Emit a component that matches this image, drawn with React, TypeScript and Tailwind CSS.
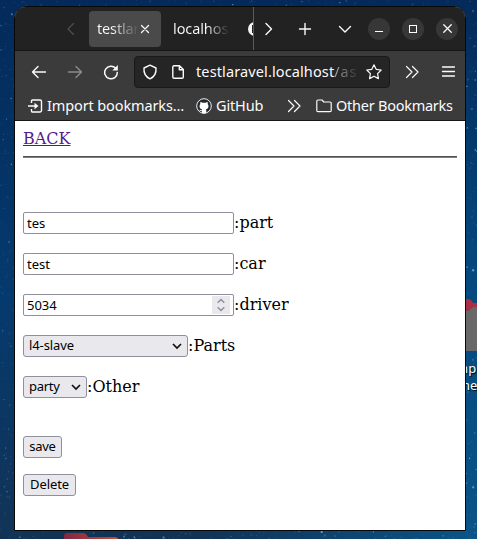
import React from "react";

type IconProps = { d: string; className?: string; size?: number; width?: number };

function Icon({ d, className = "", size = 16, width = 1.4 }: IconProps) {
  return (
    <svg width={size} height={size} viewBox="0 0 16 16" fill="none" stroke="currentColor" strokeWidth={width} strokeLinecap="round" strokeLinejoin="round" className={"shrink-0 " + className}>
      <path d={d} />
    </svg>
  );
}

const ICONS = {
  left: "M10.5 2.5 5 8l5.500 5.500",
  right: "M5 2.500 10.500 8 5 13.500",
  down: "M2.500 5.500 8 11l5.500-5.500",
  plus: "M8 2.500v11M2.500 8h11",
  close: "M4 4l8 8M12 4l-8 8",
  back: "M14.500 8H1.500M7 2.500 1.500 8 7 13.500",
  forward: "M1.500 8h13M9 2.500 14.500 8 9 13.500",
  shield: "M8 1.200 14 4c.4 4.700-1.700 8.900-6 10.900C3.700 12.900 1.600 8.700 2 4Z",
  page: "M4 1.800h5.500L13.300 5.500V13a1.200 1.200 0 0 1-1.200 1.200H4A1.200 1.200 0 0 1 2.800 13V3A1.200 1.200 0 0 1 4 1.800ZM9.300 2v3.700h3.800",
  star: "M8 .8 10.200 5.300 15.200 6 11.600 9.600 12.400 14.600 8 12.200 3.600 14.600 4.400 9.600.8 6 5.800 5.300Z",
  double: "M2.500 2.500 8 8l-5.500 5.500M8.500 2.500 14 8l-5.500 5.500",
  menu: "M2.500 3h12M2.500 7.500h12M2.500 12h12",
  folder: "M.8 12.500V3.200A1.200 1.200 0 0 1 2 2h4l1.800 2H14a1.200 1.200 0 0 1 1.200 1.200v7.300A1.200 1.200 0 0 1 14 13.700H2A1.200 1.200 0 0 1 .8 12.500Z",
};

const STARS = Array.from({ length: 5200 }, (_, i) => {
  const rand = (n: number) => {
    const v = Math.sin((i + 1) * n) * 43758.5453;
    return v - Math.floor(v);
  };
  return { x: rand(12.9898) * 477, y: rand(78.233) * 539, a: 0.1 + rand(37.719) ** 7 * 0.8, s: rand(91.7) > 0.93 ? 2 : 1.2 };
});

function Wallpaper() {
  return (
    <svg className="absolute inset-0" width="477" height="539">
      <defs>
        <linearGradient id="sky" x1="0" y1="0" x2="0" y2="1">
          <stop offset="0" stopColor="#032a5a" />
          <stop offset=".55" stopColor="#053a6e" />
          <stop offset="1" stopColor="#123356" />
        </linearGradient>
        <linearGradient id="east" x1="0" y1="0" x2="0" y2="1">
          <stop offset="0" stopColor="#042a58" />
          <stop offset=".5" stopColor="#05487e" />
          <stop offset="1" stopColor="#0a5488" />
        </linearGradient>
        <linearGradient id="folder" x1="0" y1="0" x2="1" y2="0">
          <stop offset="0" stopColor="#7e2a45" />
          <stop offset="1" stopColor="#c54b30" />
        </linearGradient>
        <linearGradient id="base" x1="0" y1="0" x2="1" y2="0">
          <stop offset="0" stopColor="#0a5488" stopOpacity="0" />
          <stop offset="1" stopColor="#0a5488" />
        </linearGradient>
      </defs>
      <rect width="477" height="539" fill="url(#sky)" />
      <rect x="200" y="530" width="277" height="9" fill="url(#base)" />
      <rect x="465" width="12" height="539" fill="url(#east)" />
      {STARS.map((s, i) => (
        <rect key={i} x={s.x} y={s.y} width={s.s} height={s.s} fill="#8bc8e6" opacity={s.a} />
      ))}
      <path d="M64 539v-3q0-3 3-3h16q3 0 5 4h27q3 0 3 2Z" fill="url(#folder)" />
      <path d="M463 299h5q3 0 5 4h4v4h-4l-5 4h-5Z" fill="#a93043" />
      <path d="M463 311h5l5-4h4v44h-14Z" fill="#686868" />
    </svg>
  );
}

function WindowButton({ children }: { children: React.ReactNode }) {
  return <div className="flex h-[22px] w-[22px] shrink-0 items-center justify-center rounded-full bg-[#373737]">{children}</div>;
}

function TabStrip() {
  return (
    <div className="flex h-11 items-center border-b border-[#151515] bg-[#222222]">
      <Icon d={ICONS.left} className="ml-12 text-[#505050]" width={1.1} />
      <div className="ml-[10px] flex h-9 w-[72px] items-center rounded bg-[#4a4a4a] pl-2">
        <span className="w-[42px] overflow-hidden whitespace-nowrap bg-gradient-to-r from-[#fbfbfe] from-35% to-[#4a4a4a] bg-clip-text text-[14.500px] tracking-[-.15px] text-transparent">testlar</span>
        <Icon d={ICONS.close} size={14} className="-ml-[1px]" />
      </div>
      <span className="ml-3 w-[55px] overflow-hidden whitespace-nowrap bg-gradient-to-r from-[#fbfbfe] from-60% to-[#303030] bg-clip-text text-[14.500px] tracking-[-.1px] text-transparent">localhos</span>
      <div className="ml-5 flex h-full w-[6px] items-center overflow-hidden border-r border-[#5c5c5c]">
        <svg width="14" height="14" viewBox="0 0 14 14" className="shrink-0"><circle cx="7" cy="7" r="7" fill="#f5f5f5" /><path d="M4 3v8h7V3Z" fill="#222" /></svg>
      </div>
      <Icon d={ICONS.right} className="ml-[7px]" />
      <Icon d={ICONS.plus} className="ml-5" />
      <Icon d={ICONS.down} className="ml-6" />
      <div className="ml-[15px] flex gap-3">
        <WindowButton><div className="mt-[5px] h-px w-2 bg-white" /></WindowButton>
        <WindowButton><div className="h-2 w-2 border border-white" /></WindowButton>
        <WindowButton><Icon d={ICONS.close} size={15} /></WindowButton>
      </div>
    </div>
  );
}

function NavigationBar() {
  return (
    <div className="flex h-[37px] items-center pt-1">
      <Icon d={ICONS.back} className="ml-4" />
      <Icon d={ICONS.forward} className="ml-5 text-[#8c8c8c]" />
      <svg width="16" height="16" viewBox="0 0 16 16" fill="none" stroke="currentColor" strokeWidth="1.5" className="ml-5 shrink-0">
        <path d="M12.700 4.300A6.300 6.300 0 1 0 14.300 8.500" strokeLinecap="round" />
        <path d="M14.800 1v5.500H9.300Z" fill="currentColor" stroke="none" />
      </svg>
      <div className="ml-[15px] flex h-8 w-64 shrink-0 items-center rounded border border-[#191919] bg-[#252525]">
        <Icon d={ICONS.shield} className="ml-[7px]" />
        <Icon d={ICONS.page} className="ml-3" />
        <span className="ml-[10px] w-[165px] whitespace-nowrap text-[14.500px] tracking-[.12px]">
          testlaravel.localhost<span className="bg-gradient-to-r from-[#b0b0b0] to-[#383838] bg-clip-text tracking-[.8px] text-transparent">/as</span>
        </span>
        <Icon d={ICONS.star} className="ml-[5px]" width={1.2} />
      </div>
      <Icon d={ICONS.double} className="ml-[14px]" width={1.2} />
      <Icon d={ICONS.menu} className="ml-5" width={1.3} />
    </div>
  );
}

function BookmarksBar() {
  return (
    <div className="flex h-[33px] items-center border-b border-[#171717] pt-1 text-[14.500px]">
      <svg width="16" height="16" viewBox="0 0 16 16" fill="none" stroke="currentColor" strokeWidth="1.4" className="ml-3 shrink-0">
        <path d="M4.500 5V3a1 1 0 0 1 1-1H13a1.500 1.500 0 0 1 1.500 1.500v9A1.500 1.500 0 0 1 13 14H5.500a1 1 0 0 1-1-1v-2M1 8h8" />
        <path d="m7.500 4.800 4 3.200-4 3.200Z" fill="currentColor" stroke="none" />
      </svg>
      <span className="ml-1 w-[138px] whitespace-nowrap tracking-[-.12px]">Import bookmarks…</span>
      <svg width="16" height="16" viewBox="0 0 16 16" className="ml-[11px] shrink-0">
        <circle cx="8" cy="8" r="7.300" fill="#24292e" stroke="#eee" />
        <path d="M5.800 15v-2c-1.500.3-2-.6-2.500-1.100.9-.2 1.300.7 2.500.4l.4-.8C4.300 11 3.500 10 3.500 8c0-.8.3-1.500.8-2-.2-.7-.1-1.500.1-2 .8 0 1.500.4 2 .8a8 8 0 0 1 3.200 0c.6-.4 1.200-.8 2-.8.2.6.2 1.400.1 2 .5.500.8 1.200.8 2 0 2-.9 3-2.700 3.500.4.400.5.900.5 1.600V15a7 7 0 0 1-4.500 0Z" fill="#fff" />
      </svg>
      <span className="ml-1 w-[48px] whitespace-nowrap tracking-[-.15px]">GitHub</span>
      <Icon d={ICONS.double} className="ml-[22px]" width={1.2} />
      <Icon d={ICONS.folder} className="ml-[14px]" width={1.2} />
      <span className="ml-1 whitespace-nowrap tracking-[-.25px]">Other Bookmarks</span>
    </div>
  );
}

const UI = "font-['Noto_Sans',sans-serif] text-[13px]";

function Field({ label, children }: { label: string; children: React.ReactNode }) {
  return (
    <label className="mb-[19px] flex h-[22px] items-center">
      {children}
      <span className="text-[16px] leading-[22px]">:{label}</span>
    </label>
  );
}

function TextBox({ value, stepper = false }: { value: string; stepper?: boolean }) {
  return (
    <div className="flex h-[22px] w-[211px] items-center rounded-[2px] border border-[#8f8f9d] bg-white pr-[3px]">
      <input readOnly defaultValue={value} className={UI + " h-5 min-w-0 flex-1 pl-[3px] outline-none"} />
      {stepper && (
        <div className="flex h-[18px] w-[18px] items-center justify-center bg-[#e9e9ed]">
          <svg width="8" height="14" viewBox="0 0 8 14" fill="none" stroke="#8f8f9d" strokeWidth="1.5"><path d="M.7 4.700 4 1.500l3.300 3.200M.7 9.300 4 12.500l3.300-3.200" /></svg>
        </div>
      )}
    </div>
  );
}

function Select({ value, wide = false }: { value: string; wide?: boolean }) {
  return (
    <div className={UI + " flex h-[22px] items-center justify-between rounded-[3px] border border-[#8f8f9d] bg-[#e9e9ed] pr-[5px] pl-[5px] " + (wide ? "w-[165px] tracking-[-.1px]" : "w-16 tracking-[-.3px]")}>
      <span>{value}</span>
      <svg width="10" height="8" viewBox="0 0 10 8" fill="none" stroke="#111" strokeWidth="1.7"><path d="M1 2l4 4 4-4" /></svg>
    </div>
  );
}

function Button({ children, className }: { children: React.ReactNode; className: string }) {
  return <button className={UI + " flex h-[22px] items-center justify-center rounded-[3px] border border-[#8f8f9d] bg-[#e9e9ed] " + className}>{children}</button>;
}

export default function App() {
  return (
    <div className="relative h-[539px] w-[477px] overflow-hidden">
      <Wallpaper />
      <div className="absolute top-[360px] left-[463px] w-10 font-['Noto_Sans',sans-serif] text-[13px] leading-[17px] text-white [text-shadow:1px_1px_1px_black]">
        <div className="-ml-[7px]">mp</div>
        <div className="-ml-px">ne</div>
      </div>
      <div className="absolute top-[6px] left-[14px] flex h-[525px] w-[452px] flex-col overflow-hidden rounded-t-xl border border-[#080808] bg-white">
        <header className="bg-[#3b3b3b] font-['Noto_Sans',sans-serif] text-[#fbfbfe]">
          <TabStrip />
          <NavigationBar />
          <BookmarksBar />
        </header>
        <main className="flex flex-col items-start px-2 pt-2 font-['DejaVu_Serif',serif] text-[16px] text-black">
          <a href="#" className="h-[19px] leading-[19px] text-[#551a8b] underline">BACK</a>
          <hr className="mt-2 mb-[54px] h-[2px] w-full border-t border-b border-t-[#505050] border-b-[#808080]" />
          <Field label="part"><TextBox value="tes" /></Field>
          <Field label="car"><TextBox value="test" /></Field>
          <Field label="driver"><TextBox value="5034" stepper /></Field>
          <Field label="Parts"><Select value="l4-slave" wide /></Field>
          <Field label="Other"><Select value="party" /></Field>
          <Button className="mt-[19px] w-[39px] tracking-[-.3px]">save</Button>
          <Button className="mt-4 w-[53px] tracking-[-.1px]">Delete</Button>
        </main>
      </div>
    </div>
  );
}
